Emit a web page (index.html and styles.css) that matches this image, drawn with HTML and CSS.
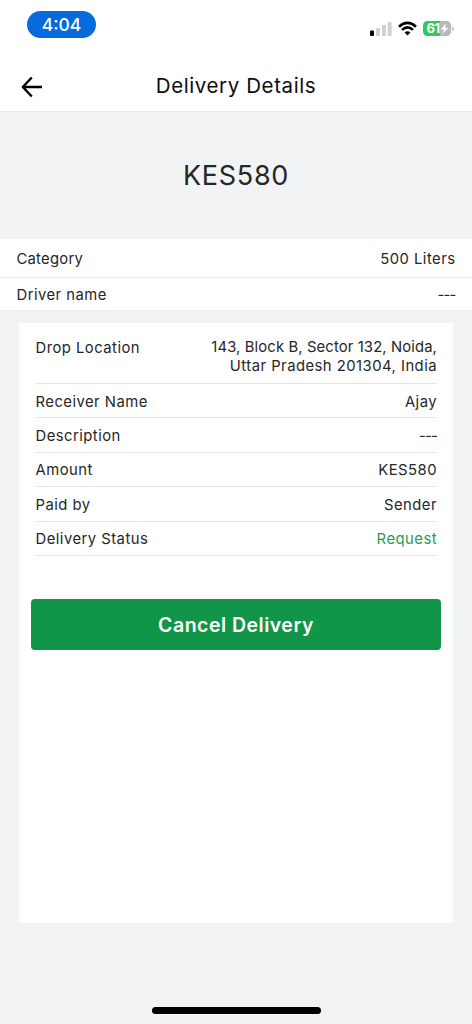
FILE: index.html
```html
<!DOCTYPE html>
<html lang="en">
<head>
<meta charset="utf-8">
<title>Delivery Details</title>
<link rel="stylesheet" href="styles.css">
</head>
<body>
<div class="screen">
  <div class="status-bar">
    <div class="clock">4:04</div>
    <svg class="indicators" width="85" height="20" viewBox="0 0 85 20">
      <rect x="0" y="10.500" width="4" height="5.500" rx="1" fill="#000"/>
      <g fill="#d1d1d1">
        <rect x="6" y="8" width="4" height="8" rx="1"/>
        <rect x="12" y="5" width="4" height="11" rx="1"/>
        <rect x="17.700" y="2" width="4" height="14" rx="1"/>
      </g>
      <g fill="none" stroke="#000" stroke-width="2.600">
        <path d="M29 6.700Q37.500 -.9 46 6.700"/>
        <path d="M32 9.900Q37.500 5 43 9.900"/>
      </g>
      <path d="M34.600 12.500Q37.500 10.200 40.400 12.500L37.500 15.600Z" fill="#000"/>
      <path d="M57.500 1H70v15H57.500A4.500 4.500 0 0 1 53 11.500V5.500A4.500 4.500 0 0 1 57.500 1Z" fill="#34c759"/>
      <path d="M70 1h6.500A4.500 4.500 0 0 1 81 5.500v6A4.500 4.500 0 0 1 76.500 16H70Z" fill="#b8b8b8"/>
      <path d="M82.200 6.500Q84 7 84 8.700T82.200 11Z" fill="#b8b8b8"/>
      <text class="charge" x="56.500" y="13.300">61</text>
      <path d="M76.300 3.200L70.500 9.500H74L72.500 14L78.500 7.700H75Z" fill="#fff"/>
    </svg>
  </div>
  <header class="app-bar">
    <svg class="back" width="22" height="22" viewBox="0 0 22 22" fill="none" stroke="#000" stroke-width="2.400" stroke-linejoin="round">
      <path d="M10.800 1.500L1.800 11L10.800 20.500M2 11H21"/>
    </svg>
    <h1 class="title">Delivery Details</h1>
  </header>
  <div class="total">KES580</div>
  <div class="summary">
    <div class="summary-row category"><span class="snug">Category</span><span>500 Liters</span></div>
    <div class="summary-row driver"><span>Driver name</span><span class="dashes">---</span></div>
  </div>
  <main class="card">
    <div class="details">
      <div class="row drop"><span class="drop-label">Drop Location</span><span class="address"><span class="street">143, Block B, Sector 132, Noida,</span><br>Uttar Pradesh 201304, India</span></div>
      <div class="row"><span>Receiver Name</span><span>Ajay</span></div>
      <div class="row"><span>Description</span><span class="dashes">---</span></div>
      <div class="row"><span>Amount</span><span>KES580</span></div>
      <div class="row"><span>Paid by</span><span>Sender</span></div>
      <div class="row"><span>Delivery Status</span><span class="request">Request</span></div>
    </div>
    <button class="cancel">Cancel Delivery</button>
  </main>
  <div class="home-indicator"></div>
</div>
</body>
</html>
```
FILE: styles.css
```css
* { box-sizing: border-box; }
body { margin: 0; }
.screen {
  width: 472px;
  height: 1024px;
  display: flex;
  flex-direction: column;
  background: #f2f3f5;
  color: #252628;
  font: 14.800px/19px Inter, sans-serif;
  letter-spacing: .48px;
}
.status-bar {
  height: 60px;
  padding: 11px 17px 0 27px;
  display: flex;
  justify-content: space-between;
  background: #fff;
}
.clock {
  width: 69px;
  height: 27px;
  border-radius: 14px;
  background: #056bdd;
  color: #fff;
  font: 500 17.500px/27px Inter, sans-serif;
  letter-spacing: 0;
  text-align: center;
}
.indicators { margin-top: 9px; }
.charge { font: 700 13px Inter, sans-serif; letter-spacing: -.5px; fill: #fff; }
.app-bar {
  height: 52px;
  padding: 2px 0 0 21px;
  display: grid;
  grid-template-columns: 22px 1fr 43px;
  align-items: center;
  background: #fff;
  border-bottom: 1px solid #ebecee;
}
.title {
  margin: 0;
  padding-bottom: 2px;
  color: #0c0c0c;
  font-size: 20.500px;
  font-weight: 400;
  letter-spacing: .6px;
  text-align: center;
}
.total {
  height: 127px;
  line-height: 128px;
  font-size: 27px;
  letter-spacing: .7px;
  text-align: center;
}
.summary { background: #fff; border-bottom: 1px solid #e9eaec; }
.summary-row {
  padding: 2px 16.500px 0;
  display: flex;
  justify-content: space-between;
  align-items: center;
}
.category { height: 39px; border-bottom: 1px solid #ebecee; }
.driver { height: 32px; }
.snug { letter-spacing: .25px; }
.dashes { letter-spacing: -.8px; }
.card {
  width: 434px;
  height: 600px;
  margin: 12px 19px 0;
  padding: 0 12px;
  background: #fff;
}
.details { margin: 0 4px; }
.row {
  height: 34.400px;
  padding: 3px 0 0 .5px;
  display: flex;
  justify-content: space-between;
  align-items: center;
  border-bottom: 1px solid #e3e4e6;
}
.drop { height: 61px; padding-top: 15px; align-items: flex-start; }
.drop-label { padding-top: 1px; }
.address { text-align: right; }
.street { letter-spacing: .13px; }
.request { color: #1f9d55; }
.cancel {
  display: block;
  width: 410px;
  height: 51px;
  margin-top: 43px;
  padding: 0;
  border: 0;
  border-radius: 4px;
  background: #109549;
  color: #fff;
  font: 600 19.500px/52px Inter, sans-serif;
  letter-spacing: .5px;
}
.home-indicator {
  width: 169px;
  height: 7px;
  margin: 84px auto 0;
  border-radius: 4px;
  background: #000;
}
```
